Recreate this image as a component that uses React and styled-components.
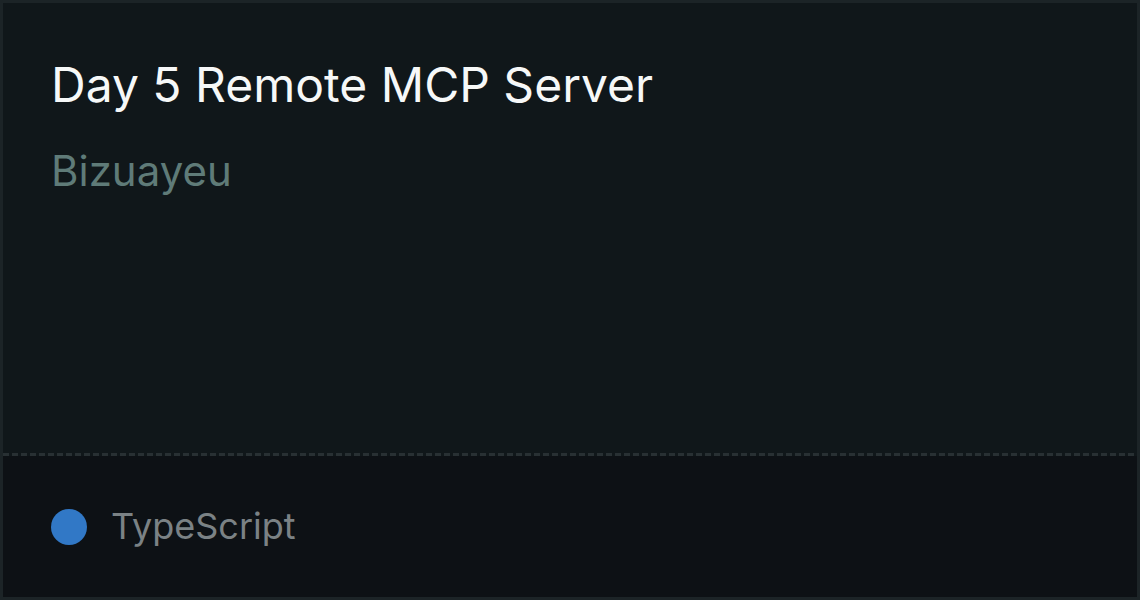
import React from "react";
import styled, { createGlobalStyle } from "styled-components";

const GlobalStyle = createGlobalStyle`
  html, body {
    margin: 0;
    padding: 0;
    background: #0d1115;
  }
  body {
    font-family: Inter, "Noto Sans", sans-serif;
  }
`;

const Card = styled.div`
  box-sizing: border-box;
  width: 1140px;
  height: 600px;
  border: 3px solid #1c2427;
  display: flex;
  flex-direction: column;
  background: #10171a;
`;

const Body = styled.div`
  flex: 1;
  padding: 53px 48px 0;
  display: flex;
  flex-direction: column;
  gap: 32px;
`;

const Title = styled.h1`
  margin: 0;
  font-size: 48px;
  font-weight: 400;
  line-height: 1.2;
  color: #f6f8f8;
`;

const Owner = styled.div`
  font-size: 42px;
  line-height: 1.2;
  color: #5f7b78;
`;

const Divider = styled.div`
  height: 3px;
  background: repeating-linear-gradient(
    to right,
    #283033 0 6px,
    transparent 6px 9px
  );
`;

const Footer = styled.div`
  height: 141px;
  background: #0d1115;
  display: flex;
  align-items: center;
  gap: 24px;
  padding: 0 48px;
`;

const Dot = styled.span`
  width: 36px;
  height: 36px;
  border-radius: 50%;
  background: ${(p) => p.color};
  flex-shrink: 0;
`;

const Language = styled.span`
  font-size: 36px;
  line-height: 1.2;
  color: #7b8285;
`;

export default function App() {
  return (
    <>
      <GlobalStyle />
      <Card>
        <Body>
          <Title>Day 5 Remote MCP Server</Title>
          <Owner>Bizuayeu</Owner>
        </Body>
        <Divider />
        <Footer>
          <Dot color="#3178c6" />
          <Language>TypeScript</Language>
        </Footer>
      </Card>
    </>
  );
}
